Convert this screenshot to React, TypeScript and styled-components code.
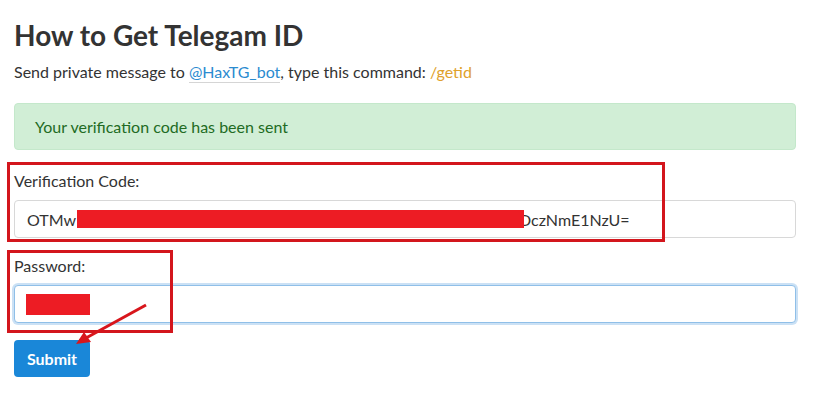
import React from "react";
import styled, { createGlobalStyle } from "styled-components";

const Global = createGlobalStyle`
  html, body { margin: 0; padding: 0; background: #fff; }
  body { font-family: Lato, "Open Sans", "Liberation Sans", sans-serif; color: #333; }
`;

const Page = styled.div`
  position: relative;
  width: 816px;
  height: 409px;
  box-sizing: border-box;
  padding: 18px 20px 0 14px;
  overflow: hidden;
`;

const Title = styled.h1`
  margin: 0;
  font-size: 28px;
  line-height: 34px;
  font-weight: 700;
  color: #333;
`;

const Lead = styled.p`
  margin: 9px 0 0;
  font-size: 16px;
  line-height: 22px;
  color: #333;
`;

const BotLink = styled.a`
  color: #2b8bd0;
  text-decoration: none;
  border-bottom: 1px solid #d5d5d5;
  padding-bottom: 1px;
`;

const Command = styled.span`
  color: #e0a12c;
`;

const Alert = styled.div`
  margin-top: 20px;
  height: 47px;
  box-sizing: border-box;
  padding: 11px 20px;
  font-size: 16px;
  line-height: 23px;
  color: #226b24;
  background: #d1eed6;
  border: 1px solid #c4e8cb;
  border-radius: 4px;
`;

const Group = styled.div<{ $top: number }>`
  display: flex;
  flex-direction: column;
  gap: 8px;
  margin-top: ${(p) => p.$top}px;
`;

const Label = styled.label`
  font-size: 16px;
  line-height: 22px;
  color: #333;
`;

const Field = styled.div<{ $focus?: boolean }>`
  display: flex;
  align-items: center;
  height: 38px;
  box-sizing: border-box;
  padding: 0 12px;
  font-size: 16px;
  color: #333;
  background: #fff;
  border-radius: 4px;
  border: 1px solid ${(p) => (p.$focus ? "#8fbfe8" : "#d8d8d8")};
  box-shadow: ${(p) => (p.$focus ? "0 0 0 2px rgba(139,189,232,0.45)" : "none")};
  white-space: nowrap;
`;

const Redact = styled.span<{ $w: number; $h: number; $ml?: number; $mr?: number }>`
  display: inline-block;
  flex: none;
  width: ${(p) => p.$w}px;
  height: ${(p) => p.$h}px;
  background: #ed1c24;
  margin-left: ${(p) => p.$ml ?? 0}px;
  margin-right: ${(p) => p.$mr ?? 0}px;
  position: relative;
  z-index: 1;
`;

const Submit = styled.button`
  margin-top: 17px;
  width: 76px;
  height: 37px;
  border: none;
  border-radius: 4px;
  background: #1a87d8;
  color: #fff;
  font-family: Lato, "Liberation Sans", sans-serif;
  font-weight: 700;
  font-size: 16px;
  padding: 0;
`;

const Mark = styled.div<{ $x: number; $y: number; $w: number; $h: number }>`
  position: absolute;
  left: ${(p) => p.$x}px;
  top: ${(p) => p.$y}px;
  width: ${(p) => p.$w}px;
  height: ${(p) => p.$h}px;
  box-sizing: border-box;
  border: 3px solid #d3161d;
  pointer-events: none;
`;

const Arrow = styled.svg`
  position: absolute;
  left: 0;
  top: 0;
  pointer-events: none;
`;

export default function App() {
  return (
    <>
      <Global />
      <Page>
        <Title>How to Get Telegam ID</Title>
        <Lead>
          Send private message to <BotLink href="#">@HaxTG_bot</BotLink>, type this command:{" "}
          <Command>/getid</Command>
        </Lead>
        <Alert>Your verification code has been sent</Alert>
        <Group $top={20}>
          <Label>Verification Code:</Label>
          <Field>
            OTMw
            <Redact $w={447} $h={18} $ml={1} $mr={-5} />
            DczNmE1NzU=
          </Field>
        </Group>
        <Group $top={17}>
          <Label>Password:</Label>
          <Field $focus>
            <Redact $w={64} $h={21} $ml={-1} />
          </Field>
        </Group>
        <Submit>Submit</Submit>
        <Mark $x={7} $y={162} $w={658} $h={80} />
        <Mark $x={7} $y={250} $w={166} $h={83} />
        <Arrow width="816" height="409" viewBox="0 0 816 409">
          <line x1="146" y1="305" x2="86" y2="338" stroke="#d8161c" strokeWidth="3" />
          <polygon points="76,344 84,332 91,342" fill="#d8161c" />
        </Arrow>
      </Page>
    </>
  );
}
